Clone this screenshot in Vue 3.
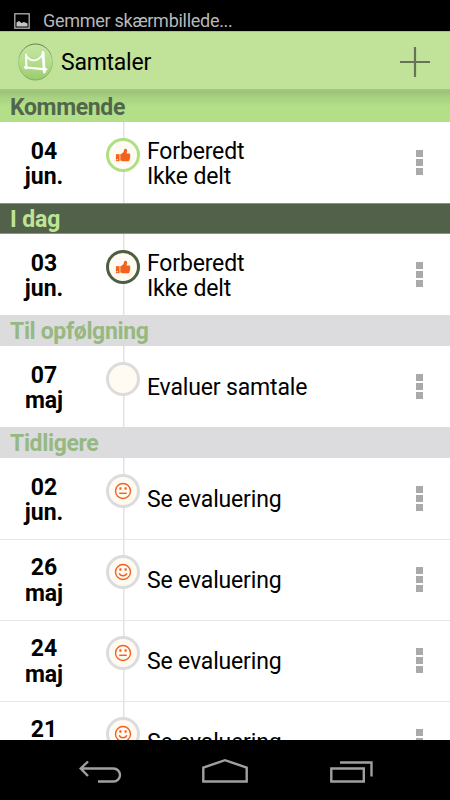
<script setup>
const sections = [
    {
        title: 'Kommende',
        type: 'upcoming',
        items: [{ day: '04', month: 'jun.', lines: ['Forberedt', 'Ikke delt'], icon: 'thumb' }],
    },
    {
        title: 'I dag',
        type: 'today',
        items: [{ day: '03', month: 'jun.', lines: ['Forberedt', 'Ikke delt'], icon: 'thumb' }],
    },
    {
        title: 'Til opfølgning',
        type: 'follow-up',
        items: [{ day: '07', month: 'maj', lines: ['Evaluer samtale'], icon: '' }],
    },
    {
        title: 'Tidligere',
        type: 'earlier',
        items: [
            { day: '02', month: 'jun.', lines: ['Se evaluering'], icon: 'neutral' },
            { day: '26', month: 'maj', lines: ['Se evaluering'], icon: 'happy' },
            { day: '24', month: 'maj', lines: ['Se evaluering'], icon: 'neutral' },
            { day: '21', month: 'maj', lines: ['Se evaluering'], icon: 'happy' },
        ],
    },
];
</script>

<template>
    <div class="screen">
        <div class="status-bar">
            <svg class="status-icon" width="16" height="16" viewBox="0 0 16 16">
                <rect x="0.8" y="0.8" width="14.4" height="14.4" fill="none" stroke="#b4b4b4" stroke-width="1.3" />
                <path d="M2.5 13.5V9.5L5 8l2.5 2 2.5-1 3.5 1.5v3z" fill="#c4c4c4" />
            </svg>
            <span class="status-text">Gemmer skærmbillede...</span>
        </div>

        <header class="action-bar">
            <svg class="logo" width="36" height="38" viewBox="0 0 36 38">
                <defs>
                    <linearGradient id="ball" x1="0" y1="0" x2="0" y2="1">
                        <stop offset="0" stop-color="#c5e5a4" />
                        <stop offset="0.55" stop-color="#b2dc88" />
                        <stop offset="1" stop-color="#9bcb6e" />
                    </linearGradient>
                    <linearGradient id="rim" x1="0" y1="0" x2="0" y2="1">
                        <stop offset="0" stop-color="#66794f" />
                        <stop offset="0.45" stop-color="#a8cb86" />
                        <stop offset="1" stop-color="#83a65f" />
                    </linearGradient>
                </defs>
                <ellipse cx="17.5" cy="19" rx="17" ry="18" fill="url(#ball)" stroke="url(#rim)" />
                <g fill="none" stroke="#fff" stroke-linecap="round" stroke-linejoin="round">
                    <path d="M8 11.5l.4 14" stroke-width="2" />
                    <path d="M25 9.5l1.300 19.5" stroke-width="2.8" />
                    <path d="M8 12.5c4.500 7 12 6.500 17-1.500" stroke-width="1.8" />
                    <path d="M6.800 24.300l21.500 2" stroke-width="2.2" />
                </g>
            </svg>
            <h1>Samtaler</h1>
            <button class="add-btn" aria-label="Tilføj">
                <svg width="30" height="30" viewBox="0 0 30 30">
                    <path d="M15 0v30M0 15h30" stroke="#66735a" stroke-width="2.2" />
                </svg>
            </button>
        </header>

        <main class="list">
            <section v-for="section in sections" :key="section.title" :class="section.type">
                <h2>{{ section.title }}</h2>
                <div v-for="item in section.items" :key="item.day" class="row">
                    <div class="date">{{ item.day }}<br>{{ item.month }}</div>
                    <div class="timeline">
                        <div class="circle">
                            <svg v-if="item.icon === 'thumb'" width="16" height="16" viewBox="0 0 16 16" fill="#f4611c">
                                <path d="M0.9 7.2h3.700v7H0.9z" />
                                <path d="M5.300 7.200c1.700-.5 3.300-2 3.600-3.300.1-1 .3-2.200 1.300-2.200 1.600 0 2.200 1.400 1.900 2.700l-.7 2h2.800c1.200.2 1.300 1.500.9 2.100.4.700.3 1.500-.1 2 .2.800 0 1.400-.4 1.900 0 1.100-.5 1.800-1.500 1.800H8.700c-1.200 0-2-.3-3.400-.7z" />
                                <circle cx="2.3" cy="12.6" r="0.7" fill="#fffaf0" />
                            </svg>
                            <svg v-else-if="item.icon" width="18" height="18" viewBox="0 0 18 18">
                                <circle cx="9" cy="9" r="7.5" fill="none" stroke="#f4611c" stroke-width="1.4" />
                                <rect x="5.3" y="5.3" width="2.2" height="2.4" rx="0.6" fill="#f4611c" />
                                <rect x="10.5" y="5.3" width="2.2" height="2.4" rx="0.6" fill="#f4611c" />
                                <path v-if="item.icon === 'neutral'" d="M5.2 11.3h7.6" stroke="#f4611c" stroke-width="1.4" />
                                <path v-else d="M5.2 10.3c1.2 3.3 6.4 3.3 7.6 0" fill="none" stroke="#f4611c" stroke-width="1.4" />
                            </svg>
                        </div>
                    </div>
                    <div class="text">
                        <div v-for="line in item.lines" :key="line">{{ line }}</div>
                    </div>
                    <div class="menu"><i></i><i></i><i></i></div>
                </div>
            </section>
        </main>

        <nav class="nav-bar">
            <svg width="450" height="60" viewBox="0 0 450 60" fill="none" stroke="#a0a0a0" stroke-width="2.4">
                <path d="M88 21.5l-7.300 7L88 36M81 28.5h32.500a6.500 6.500 0 0 1 0 13H98" />
                <path d="M203.300 41.500V27.500L225 20.200l21.700 7.300v14z" />
                <path d="M331.300 28.500h32.500v13h-32.500zM340 22.500h31.500V36.500" />
            </svg>
        </nav>
    </div>
</template>

<style>
body {
    margin: 0;
    background: #000;
}
</style>

<style scoped>
.screen {
    width: 450px;
    height: 800px;
    display: flex;
    flex-direction: column;
    overflow: hidden;
    background: #fff;
    font-family: Roboto, sans-serif;
    color: #000;
}

.status-bar {
    height: 31px;
    flex: none;
    display: flex;
    background: #000;
    color: #b8b8b8;
}

.status-icon {
    margin: 13px 0 0 14px;
}

.status-text {
    margin: 10px 0 0 13px;
    font-size: 18px;
    line-height: 21px;
    letter-spacing: -0.28px;
    white-space: nowrap;
}

.action-bar {
    height: 60px;
    flex: none;
    box-sizing: border-box;
    display: flex;
    align-items: center;
    padding: 2px 20px 0 18px;
    background: #c0e399;
    border-top: 1px solid #a6c487;
    border-bottom: 2px solid #a5c783;
}

.action-bar h1 {
    margin: 2px 0 0 7px;
    flex: 1;
    font-size: 23px;
    font-weight: 400;
    line-height: 28px;
    letter-spacing: -0.25px;
}

.add-btn {
    display: flex;
    padding: 0;
    border: none;
    background: none;
}

.list {
    flex: 1;
    min-height: 0;
    overflow: hidden;
}

h2 {
    height: 31px;
    box-sizing: border-box;
    margin: 0;
    padding: 3px 10px 0;
    font-size: 23px;
    font-weight: 700;
    line-height: 28px;
    letter-spacing: -0.36px;
    background: #dcdcde;
    color: #96b882;
}

.upcoming h2 {
    background: linear-gradient(#9bc277, #a7d180 6px, #b2df88 15px);
    color: #52664b;
}

.today h2 {
    background: #526149;
    color: #bfe496;
    border-top: 1px solid #87947f;
    border-bottom: 1px solid #87947f;
    padding-top: 2px;
    letter-spacing: -0.1px;
}

.row {
    height: 81px;
    box-sizing: border-box;
    display: flex;
    align-items: center;
}

.row + .row {
    border-top: 1px solid #e6e6e6;
}

.date {
    width: 88px;
    padding-top: 3px;
    text-align: center;
    font-size: 23px;
    font-weight: 700;
    line-height: 25.5px;
}

.timeline {
    width: 34px;
    margin-left: 18px;
    align-self: stretch;
    display: flex;
    justify-content: center;
    align-items: flex-start;
    background: linear-gradient(#e2e2e2, #e2e2e2) 16.5px 0 / 1.5px 100% no-repeat;
}

.circle {
    width: 34px;
    height: 34px;
    box-sizing: border-box;
    margin-top: 16px;
    border: 3px solid #dcdcdc;
    border-radius: 50%;
    background: #fffbf3;
    display: flex;
    align-items: center;
    justify-content: center;
}

.upcoming .circle {
    border-color: #aedf83;
}

.today .circle {
    border-color: #4d5e43;
}

.row + .row .circle {
    margin-top: 15px;
}

.text {
    flex: 1;
    margin-left: 7px;
    padding-top: 3px;
    font-size: 23px;
    line-height: 25.5px;
    letter-spacing: -0.16px;
    white-space: nowrap;
}

.row + .row .date,
.row + .row .text {
    padding-top: 1px;
}

.menu {
    display: flex;
    flex-direction: column;
    gap: 2px;
    margin-right: 27px;
}

.row + .row .menu {
    margin-top: -1px;
}

.menu i {
    width: 7px;
    height: 7px;
    background: #aaa;
}

.nav-bar {
    height: 60px;
    flex: none;
    background: #000;
}
</style>
